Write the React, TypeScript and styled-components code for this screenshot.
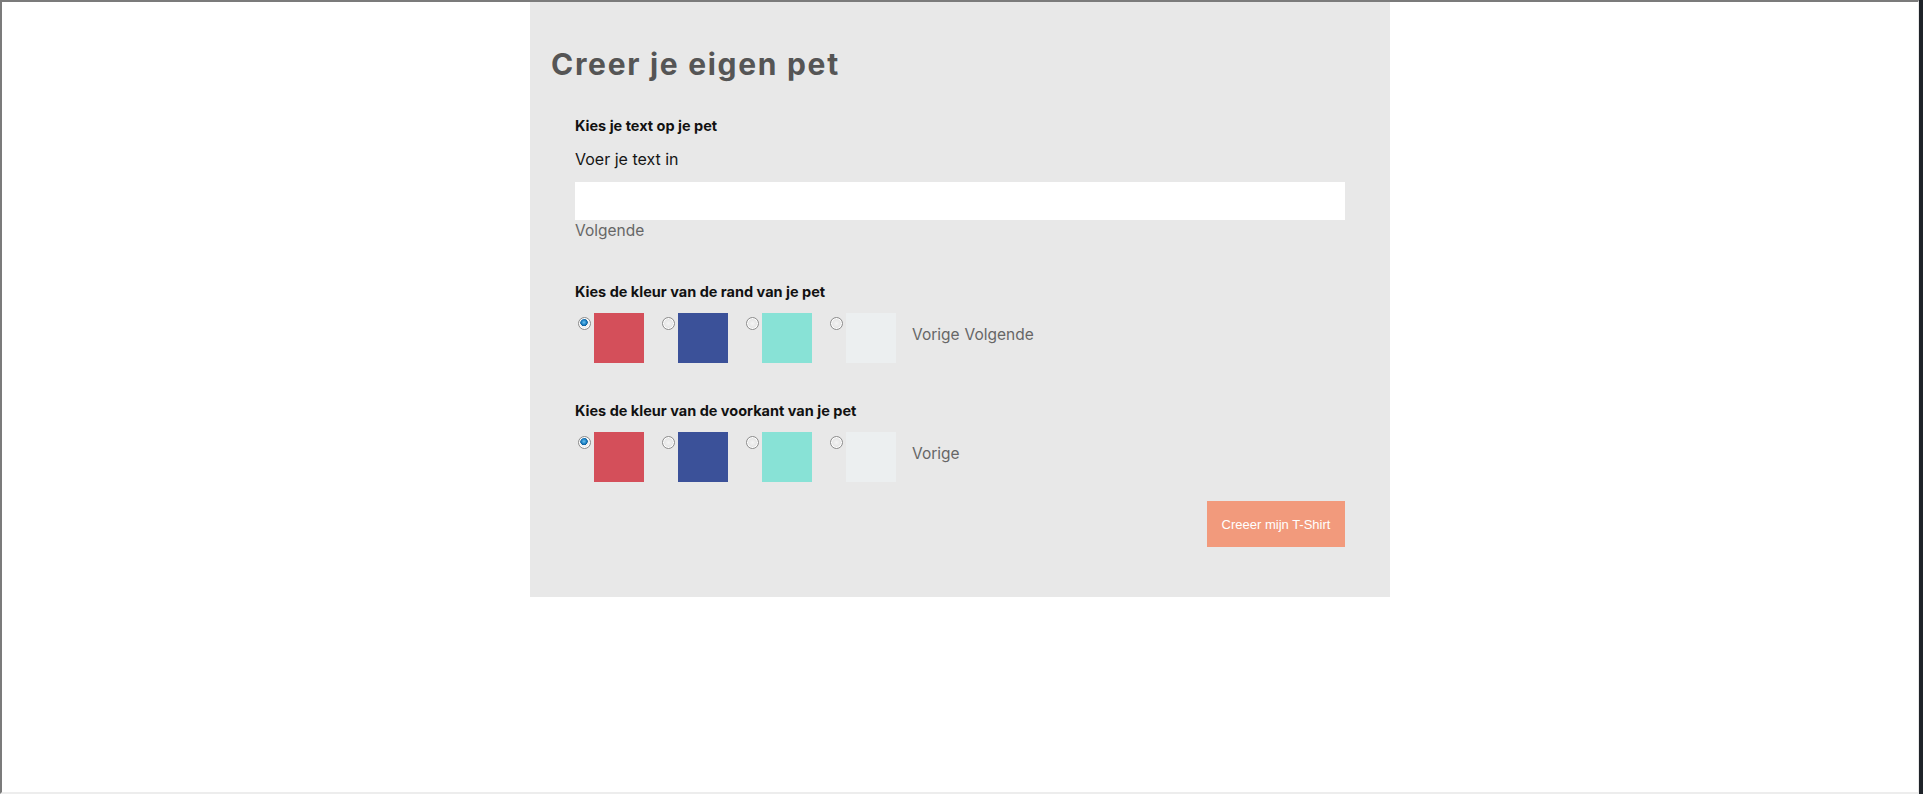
import React, { useState } from "react";
import styled, { createGlobalStyle } from "styled-components";

const Global = createGlobalStyle`
  html, body { margin: 0; padding: 0; }
  html { background: #1f2329; }
  body {
    width: 1919px;
    height: 794px;
    overflow: hidden;
    font-family: Inter, Lato, "Open Sans", Arial, sans-serif;
  }
`;

const Frame = styled.div`
  box-sizing: border-box;
  width: 1919px;
  height: 794px;
  background: #ffffff;
  border-left: 2px solid #7b7b7b;
  border-top: 2px solid #7b7b7b;
  border-bottom: 2px solid #ededed;
  border-right: 1px solid #e9e9e9;
`;

const Panel = styled.main`
  box-sizing: border-box;
  width: 860px;
  margin: 0 auto;
  background: #e8e8e8;
  padding: 44px 45px 50px 45px;
  display: flex;
  flex-direction: column;
`;

const Title = styled.h1`
  margin: 0 0 0 -24px;
  font-family: Inter, Lato, sans-serif;
  font-weight: 700;
  font-size: 30px;
  line-height: 36px;
  letter-spacing: 1.7px;
  color: #555555;
`;

const Section = styled.section<{ $top: number }>`
  margin-top: ${(p) => p.$top}px;
  display: flex;
  flex-direction: column;
`;

const SectionTitle = styled.h3`
  margin: 0;
  font-size: 14.5px;
  line-height: 17px;
  font-weight: 700;
  color: #111111;
`;

const Label = styled.label`
  margin-top: 16px;
  font-size: 16px;
  line-height: 19px;
  color: #151515;
`;

const TextInput = styled.input`
  box-sizing: border-box;
  margin-top: 13px;
  width: 100%;
  height: 38px;
  border: none;
  background: #ffffff;
  padding: 0 10px;
  font-size: 16px;
  outline: none;
`;

const NavLink = styled.span`
  font-size: 15.5px;
  line-height: 19px;
  color: #666666;
  cursor: pointer;
`;

const NavRow = styled.div<{ $top: number }>`
  margin-top: ${(p) => p.$top}px;
  display: flex;
  gap: 5px;
`;

const SwatchRow = styled.div`
  margin-top: 13px;
  height: 50px;
  display: flex;
  align-items: flex-start;
  gap: 15px;
`;

const Option = styled.label`
  display: flex;
  align-items: flex-start;
  cursor: pointer;
`;

const Radio = styled.input.attrs({ type: "radio" })`
  appearance: none;
  box-sizing: border-box;
  width: 13px;
  height: 13px;
  margin: 4px 3px 0 3px;
  border-radius: 50%;
  border: 1px solid #8c8c8c;
  background: radial-gradient(circle at 50% 50%, #f4f4f4 0, #e2e2e2 70%);
  box-shadow: inset 0 0 0 1px #ffffff;
  cursor: pointer;
  &:checked {
    background: radial-gradient(circle at 45% 40%, #6fc3ef 0, #1a7fc3 2.5px, #0d5e9a 3.5px, #f2f2f2 4px, #dedede 100%);
  }
`;

const Swatch = styled.span<{ $color: string }>`
  display: block;
  width: 50px;
  height: 50px;
  background: ${(p) => p.$color};
`;

const Links = styled.div`
  margin-left: 1px;
  padding-top: 12px;
  display: flex;
  gap: 5px;
`;

const Actions = styled.div`
  margin-top: 19px;
  display: flex;
  justify-content: flex-end;
`;

const CreateButton = styled.button`
  width: 138px;
  height: 46px;
  border: none;
  background: #f29a7c;
  color: #ffffff;
  font-family: "Liberation Sans", Arial, sans-serif;
  font-size: 13px;
  cursor: pointer;
`;

const colors = ["#d44f5a", "#3b5199", "#88e2d6", "#eceff0"];

function ColorPicker({
  name,
  showNext,
}: {
  name: string;
  showNext: boolean;
}) {
  const [selected, setSelected] = useState(0);
  return (
    <SwatchRow>
      {colors.map((c, i) => (
        <Option key={c}>
          <Radio
            name={name}
            checked={selected === i}
            onChange={() => setSelected(i)}
          />
          <Swatch $color={c} />
        </Option>
      ))}
      <Links>
        <NavLink>Vorige</NavLink>
        {showNext && <NavLink>Volgende</NavLink>}
      </Links>
    </SwatchRow>
  );
}

export default function App() {
  return (
    <>
      <Global />
      <Frame>
        <Panel>
          <Title>Creer je eigen pet</Title>
          <Section $top={35}>
            <SectionTitle>Kies je text op je pet</SectionTitle>
            <Label htmlFor="pet-text">Voer je text in</Label>
            <TextInput id="pet-text" type="text" />
            <NavRow $top={1}>
              <NavLink>Volgende</NavLink>
            </NavRow>
          </Section>
          <Section $top={43}>
            <SectionTitle>Kies de kleur van de rand van je pet</SectionTitle>
            <ColorPicker name="rand" showNext />
          </Section>
          <Section $top={39}>
            <SectionTitle>Kies de kleur van de voorkant van je pet</SectionTitle>
            <ColorPicker name="voorkant" showNext={false} />
          </Section>
          <Actions>
            <CreateButton>Creeer mijn T-Shirt</CreateButton>
          </Actions>
        </Panel>
      </Frame>
    </>
  );
}
